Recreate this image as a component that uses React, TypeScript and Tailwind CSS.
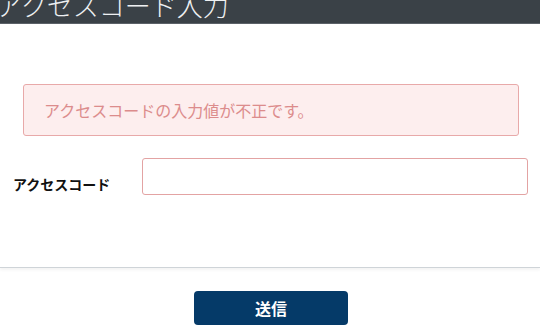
export default function App() {
  return (
    <div
      className="min-h-[331px] w-[540px] overflow-hidden bg-white"
      style={{ fontFamily: '"Noto Sans CJK JP", "Noto Sans", sans-serif' }}
    >
      {/* header */}
      <header className="h-[24px] overflow-hidden border-b border-[#5b6168] bg-[#3a4147]">
        <h1 className="-ml-[4px] -mt-[11px] whitespace-nowrap text-[26px] font-light leading-[32px] text-[#eef0f2]">
          アクセスコード入力
        </h1>
      </header>

      {/* body */}
      <main className="h-[244px] border-b border-[#cfd4d8] pl-[13px] pr-[12px] pt-[60px] shadow-[0_2px_3px_rgba(0,0,0,0.05)]">
        <div className="ml-[10px] mr-[9px] flex h-[52px] items-center rounded-[3px] border border-[#e8a9a9] bg-[#fdeeee] px-[20px] text-[16px] text-[#dc8c8c]">
          アクセスコードの入力値が不正です。
        </div>

        <div className="mt-[22px] flex items-center">
          <label className="w-[129px] pt-[16px] text-[14px] font-bold text-[#111]">アクセスコード</label>
          <input
            type="text"
            className="h-[37px] flex-1 rounded-[3px] border border-[#e3a3a3] bg-white px-2 outline-none"
          />
        </div>
      </main>

      {/* footer */}
      <footer className="flex justify-center pt-[23px]">
        <button className="ml-[2px] h-[34px] w-[154px] rounded-[4px] bg-[#053a68] text-[16px] font-bold text-white">
          送信
        </button>
      </footer>
    </div>
  );
}
